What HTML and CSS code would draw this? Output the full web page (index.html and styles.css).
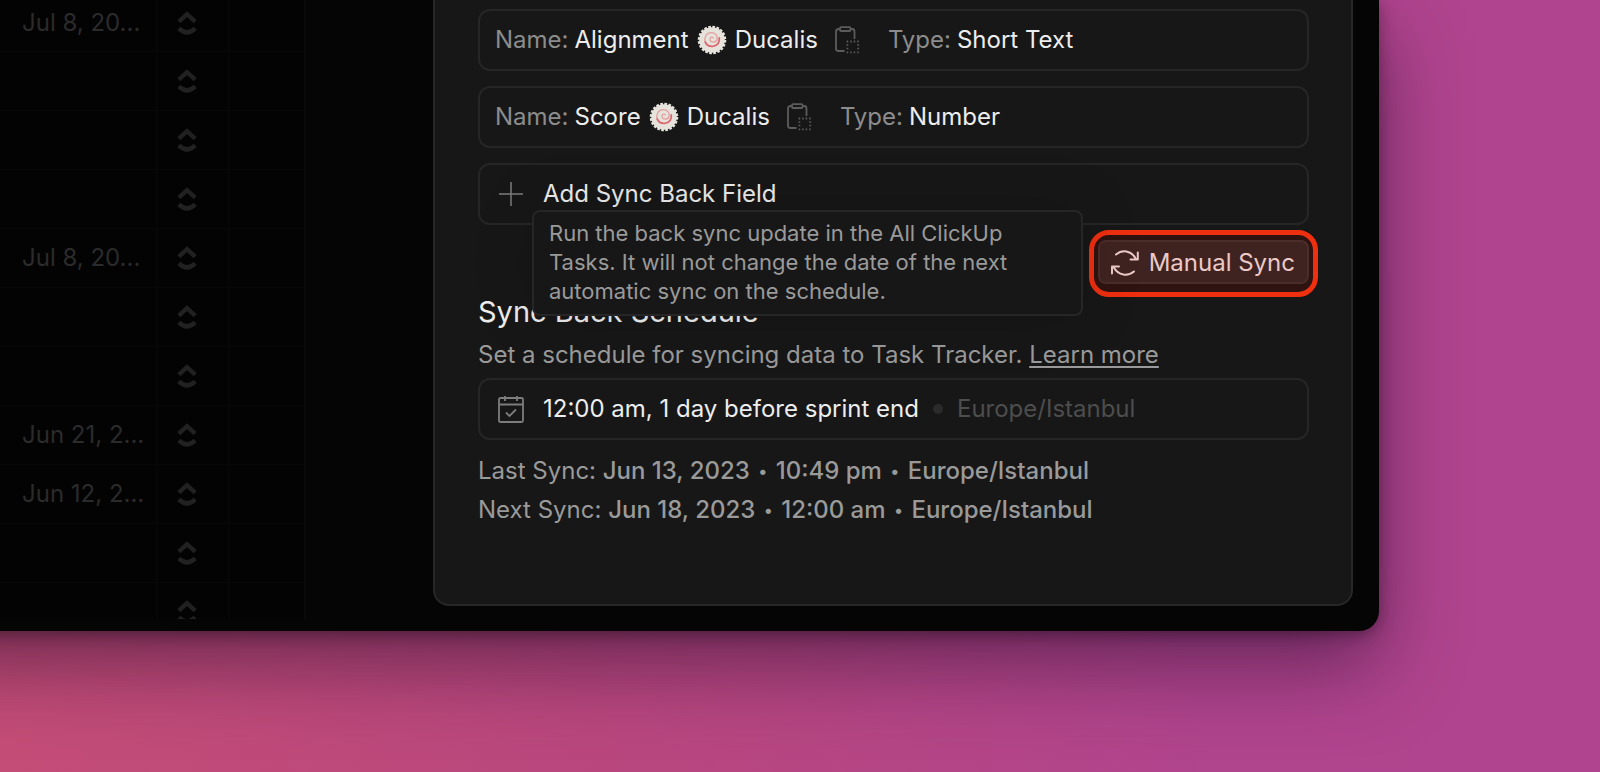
FILE: index.html
```
<!DOCTYPE html>
<html lang="en">

<head>
  <meta charset="UTF-8" />
  <meta name="viewport" content="width=device-width, initial-scale=1" />
  <title>Sync Back Settings</title>
  <link rel="stylesheet" href="styles.css">
</head>

<body>
  <!-- shared icons -->
  <svg class="icon-sprite" aria-hidden="true">
    <symbol id="clickup" viewBox="0 0 20 26">
      <path d="M1.8 11.6 10 4.2l8.2 7.4" fill="none" stroke="currentColor" stroke-width="4.4" />
      <path d="M1.8 18.4q8.2 8 16.4 0" fill="none" stroke="currentColor" stroke-width="4.4" />
    </symbol>
    <symbol id="naruto" viewBox="0 0 30 30">
      <circle cx="15" cy="15" r="12.8" fill="#e6e3dc" />
      <circle cx="15" cy="15" r="12.8" fill="none" stroke="#e6e3dc" stroke-width="3" stroke-dasharray="2.6 1.42" />
      <path d="M8.2 17C6.8 12 9.5 7.8 14 7.6C18.500 7.500 21 11 20 14.500C19 18 13.500 18 13 14.500C12.800 12.500 15 11.500 16.300 12.800" fill="none" stroke="#e5a09e" stroke-width="1.3" stroke-linecap="round" />
      <path d="M8.2 17C10 20.800 13.500 21.700 16.500 21.200C20 20.500 22.600 17.500 22.300 13" fill="none" stroke="#dd6972" stroke-width="1.8" stroke-linecap="round" />
    </symbol>
    <symbol id="paste" viewBox="0 0 26 28">
      <g fill="none" stroke="currentColor" stroke-width="1.8">
        <path d="M6 3H4.500Q2 3 2 5.500V22.500Q2 25 4.500 25H10.500M16 3H18Q20.500 3 20.500 5.500V13" />
        <rect x="6" y="1.2" width="10.5" height="3.8" rx="1" />
        <path d="M12.700 15.500H25M12.700 26.300H25M13.400 18.300V25M24.200 18.300V25" stroke-dasharray="1.5 2" />
      </g>
    </symbol>
  </svg>

  <div class="window">
    <table class="tasks">
      <tr><td>Jul 8, 20...</td><td><svg class="clickup-icon"><use href="#clickup" /></svg></td><td></td></tr>
      <tr><td></td><td><svg class="clickup-icon"><use href="#clickup" /></svg></td><td></td></tr>
      <tr><td></td><td><svg class="clickup-icon"><use href="#clickup" /></svg></td><td></td></tr>
      <tr><td></td><td><svg class="clickup-icon"><use href="#clickup" /></svg></td><td></td></tr>
      <tr><td>Jul 8, 20...</td><td><svg class="clickup-icon"><use href="#clickup" /></svg></td><td></td></tr>
      <tr><td></td><td><svg class="clickup-icon"><use href="#clickup" /></svg></td><td></td></tr>
      <tr><td></td><td><svg class="clickup-icon"><use href="#clickup" /></svg></td><td></td></tr>
      <tr><td>Jun 21, 2...</td><td><svg class="clickup-icon"><use href="#clickup" /></svg></td><td></td></tr>
      <tr><td>Jun 12, 2...</td><td><svg class="clickup-icon"><use href="#clickup" /></svg></td><td></td></tr>
      <tr><td></td><td><svg class="clickup-icon"><use href="#clickup" /></svg></td><td></td></tr>
      <tr><td></td><td><svg class="clickup-icon"><use href="#clickup" /></svg></td><td></td></tr>
    </table>

    <main class="panel">
      <div class="fields">
        <div class="field">
          <span class="label">Name:</span>
          <span class="value">Alignment <svg class="naruto-icon"><use href="#naruto" /></svg> Ducalis</span>
          <button class="copy-button" aria-label="Copy name"><svg class="paste-icon"><use href="#paste" /></svg></button>
          <span class="label">Type:</span>
          <span class="value">Short Text</span>
        </div>
        <div class="field">
          <span class="label">Name:</span>
          <span class="value">Score <svg class="naruto-icon"><use href="#naruto" /></svg> Ducalis</span>
          <button class="copy-button" aria-label="Copy name"><svg class="paste-icon"><use href="#paste" /></svg></button>
          <span class="label">Type:</span>
          <span class="value">Number</span>
        </div>
        <button class="field">
          <svg class="field-icon" viewBox="0 0 32 32">
            <path d="M16 4v24M4 16h24" fill="none" stroke="currentColor" stroke-width="1.5" />
          </svg>
          <span class="value">Add Sync Back Field</span>
        </button>
      </div>

      <div class="sync-row">
        <div class="tooltip" role="tooltip" id="sync-tip">Run the back sync update in the All ClickUp Tasks. It will not change the date of the next automatic sync on the schedule.</div>
        <div class="highlight">
          <button class="sync-button" aria-describedby="sync-tip">
            <svg class="sync-icon" viewBox="0 0 28 28">
              <g fill="none" stroke="currentColor" stroke-width="2" stroke-linecap="round" stroke-linejoin="round">
                <path d="M5 5.500C11 .5 20 .8 25 10" />
                <path d="M26.800 3.500V10.500H19.500" />
                <path d="M23 22.500C17 27.500 7.500 27 2.500 18" />
                <path d="M1 24.500V17.500H8" />
              </g>
            </svg>
            Manual Sync
          </button>
        </div>
      </div>

      <h2 class="heading">Sync Back Schedule</h2>
      <p class="hint">Set a schedule for syncing data to Task Tracker. <a href="#">Learn more</a></p>
      <button class="field">
        <svg class="field-icon" viewBox="0 0 32 32">
          <g fill="none" stroke="currentColor" stroke-width="1.8">
            <rect x="4" y="5" width="24" height="24" rx="1.5" />
            <path d="M4 11.500h24M10 3v5M22 3v5M11 19.500l3.500 3.500 6.500-6.500" />
          </g>
        </svg>
        <span class="value">12:00 am, 1 day before sprint end</span>
        <span class="dot"></span>
        <span class="timezone">Europe/Istanbul</span>
      </button>
      <div class="sync-times">
        <p>Last Sync: <b>Jun 13, 2023 <i>•</i> 10:49 pm <i>•</i> Europe/Istanbul</b></p>
        <p>Next Sync: <b>Jun 18, 2023 <i>•</i> 12:00 am <i>•</i> Europe/Istanbul</b></p>
      </div>
    </main>
  </div>
</body>

</html>
```
FILE: styles.css
```
* {
  box-sizing: border-box;
}

body {
  margin: 0;
  min-height: 100vh;
  padding: 0 221px 141px 0;
  overflow: hidden;
  font-family: Inter, 'Liberation Sans', sans-serif;
  font-size: 24px;
  line-height: 30px;
  color: #9a9a9a;
  background: linear-gradient(80deg, #c44d77 0%, #b9477e 35%, #b0448d 70%, #b0448f 100%);
}

button {
  font: inherit;
  color: inherit;
  background: none;
  border: none;
  padding: 0;
  cursor: pointer;
}

p,
h2 {
  margin: 0;
}

.icon-sprite {
  display: none;
}

/* runs off the left edge so its shadow does too */
.window {
  display: flex;
  justify-content: space-between;
  height: 631px;
  margin-left: -100px;
  padding: 0 26px 12px 100px;
  background-color: #050505;
  border-radius: 0 0 20px 0;
  box-shadow: 0 4px 16px rgba(0, 0, 0, 0.35), 0 34px 80px rgba(30, 10, 40, 0.5);
}

/* dimmed task list */

.tasks {
  display: block;
  width: 306px;
  overflow: hidden;
  border-collapse: collapse;
  color: #2b2b2b;
  background-color: #030303;
  border-right: 1px solid #0b0b0b;
}

.tasks tr {
  height: 59px;
}

.tasks td {
  padding: 0;
  border-right: 1px solid #080808;
  border-bottom: 1px solid #080808;
}

.tasks tr:first-child {
  height: 51px;
}

.tasks tr:first-child td {
  padding-bottom: 4px;
}

.tasks td:nth-child(1) {
  width: 157px;
  padding-left: 22px;
}

.tasks td:nth-child(2) {
  width: 72px;
  padding-left: 20px;
}

.tasks td:nth-child(3) {
  width: 76px;
}

.clickup-icon {
  display: block;
  width: 20px;
  height: 26px;
  color: #212121;
}

/* settings panel */

.panel {
  flex: 0 0 920px;
  margin-bottom: 13px;
  padding: 9px 42px 0 43px;
  background-color: #171717;
  border: 2px solid #272727;
  border-top: none;
  border-radius: 0 0 16px 16px;
}

.fields {
  display: flex;
  flex-direction: column;
  gap: 15px;
}

.field {
  display: flex;
  align-items: center;
  gap: 6px;
  width: 100%;
  height: 62px;
  padding: 0 15px;
  border: 2px solid #262626;
  border-radius: 12px;
}

.label {
  color: #8c8c8c;
}

.value {
  display: flex;
  align-items: center;
  gap: 8px;
  color: #ededed;
}

.naruto-icon {
  width: 30px;
  height: 30px;
}

.copy-button {
  display: flex;
  margin: 0 22px 0 10px;
  color: #5c5c5c;
}

.paste-icon {
  width: 26px;
  height: 28px;
}

.field-icon {
  width: 32px;
  height: 32px;
  margin-right: 10px;
  color: #7d7d7d;
}

.dot {
  width: 10px;
  height: 10px;
  margin: 0 8px;
  border-radius: 50%;
  background-color: #2b2b2b;
}

.timezone {
  color: #4d4d4d;
}

.sync-row {
  position: relative;
  display: flex;
  justify-content: flex-end;
  margin: 5px -9px 0 0;
}

.tooltip {
  position: absolute;
  right: 235px;
  bottom: -19px;
  width: 551px;
  padding: 7px 15px 8px;
  font-size: 22px;
  line-height: 29px;
  background-color: #171717;
  border: 2px solid #262626;
  border-radius: 8px;
  box-shadow: 0 0 60px rgba(0, 0, 0, 0.15);
}

.highlight {
  padding: 5px 4px 8px;
  background-color: #2f1310;
  border: 5px solid #ee2f10;
  border-radius: 20px;
}

.sync-button {
  display: flex;
  align-items: center;
  gap: 10px;
  height: 44px;
  padding: 1px 12px 0 11px;
  color: #ecc9c6;
  background-color: #3f2321;
  border: 2px solid #4b2d2a;
  border-radius: 8px;
}

.sync-icon {
  width: 28px;
  height: 28px;
}

.heading {
  font-size: 29px;
  font-weight: 400;
  line-height: 30px;
  color: #ededed;
}

.hint {
  margin: 13px 0 8px;
}

.hint a {
  color: inherit;
  text-underline-offset: 3px;
}

.sync-times {
  padding-top: 11px;
  line-height: 39px;
}

.sync-times b {
  font-weight: 500;
}

.sync-times i {
  margin: 0 2px;
  font-size: 17px;
  font-style: normal;
  line-height: 17px;
  vertical-align: 2px;
}
```
